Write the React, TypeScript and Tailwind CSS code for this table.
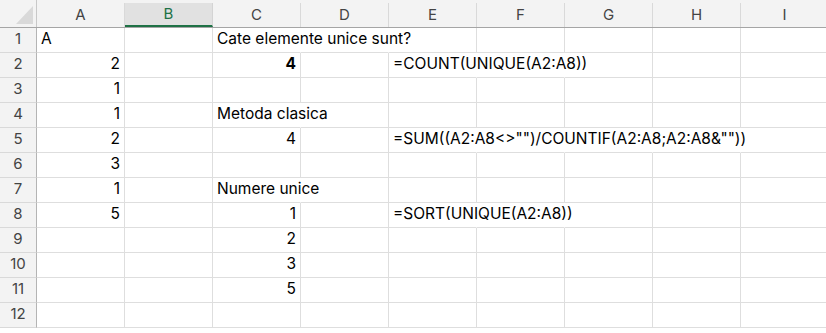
import React from 'react';

type Cell = { text: string; align?: 'left' | 'right'; bold?: boolean };

const cols = ['A', 'B', 'C', 'D', 'E', 'F', 'G', 'H', 'I'];

// cell contents by row (1-based) and column letter
const data: Record<number, Record<string, Cell>> = {
  1: { A: { text: 'A' }, C: { text: 'Cate elemente unice sunt?' } },
  2: { A: { text: '2', align: 'right' }, C: { text: '4', align: 'right', bold: true }, E: { text: '=COUNT(UNIQUE(A2:A8))' } },
  3: { A: { text: '1', align: 'right' } },
  4: { A: { text: '1', align: 'right' }, C: { text: 'Metoda clasica' } },
  5: { A: { text: '2', align: 'right' }, C: { text: '4', align: 'right' }, E: { text: '=SUM((A2:A8<>"")/COUNTIF(A2:A8;A2:A8&""))' } },
  6: { A: { text: '3', align: 'right' } },
  7: { A: { text: '1', align: 'right' }, C: { text: 'Numere unice' } },
  8: { A: { text: '5', align: 'right' }, C: { text: '1', align: 'right' }, E: { text: '=SORT(UNIQUE(A2:A8))' } },
  9: { C: { text: '2', align: 'right' } },
  10: { C: { text: '3', align: 'right' } },
  11: { C: { text: '5', align: 'right' } },
  12: {},
};

// gridlines hidden under text that spills into the next cells
const hidden: Record<number, string[]> = {
  1: ['C', 'D'],
  2: ['E', 'F'],
  4: ['C'],
  5: ['E', 'F', 'G', 'H'],
  7: ['C'],
  8: ['E', 'F'],
};

export default function App() {
  const rows = Array.from({ length: 12 }, (_, i) => i + 1);

  return (
    <div
      className="w-[826px] h-[333px] overflow-hidden bg-white text-[15px] text-black"
      style={{ fontFamily: 'Inter, "Liberation Sans", Arial, sans-serif' }}
    >
      {/* column headers */}
      <div className="flex h-[28px] bg-[#f3f3f3] border-b border-[#a5a5a5]">
        <div className="w-[37px] shrink-0 relative border-r border-[#c8c8c8]">
          <svg className="absolute left-[16px] top-[6px]" width="18" height="19" viewBox="0 0 18 19">
            <polygon points="17,0 17,18 0,18" fill="#d9d9d9" />
          </svg>
        </div>
        {cols.map((c) =>
          c === 'B' ? (
            <div
              key={c}
              className="w-[88px] shrink-0 mt-[3px] flex items-center justify-center bg-[#e1e1e1] border-r border-[#d4d4d4] border-b-2 border-b-[#1e7145] text-[#1e7145]"
            >
              {c}
            </div>
          ) : (
            <div
              key={c}
              className="w-[88px] shrink-0 mt-[3px] flex items-center justify-center border-r border-[#d9d9d9] text-[#444]"
            >
              {c}
            </div>
          )
        )}
      </div>

      {rows.map((r) => (
        <div key={r} className="flex h-[25px]">
          <div className="w-[37px] shrink-0 flex items-end justify-center pb-[2px] bg-[#f3f3f3] border-r border-[#b4b4b4] border-b border-b-[#d9d9d9] text-[#444]">
            {r}
          </div>
          {cols.map((c) => {
            const cell = data[r]?.[c];
            const noRight = hidden[r]?.includes(c);
            return (
              <div
                key={c}
                className={
                  'w-[88px] shrink-0 relative flex items-end pb-[2px] px-[4px] whitespace-nowrap text-[15.5px] border-b border-[#dedede] ' +
                  (noRight ? 'border-r border-r-transparent ' : 'border-r ') +
                  (cell?.align === 'right' ? 'justify-end' : 'justify-start')
                }
              >
                {cell && (
                  <span className={cell.bold ? 'font-bold' : ''}>{cell.text}</span>
                )}
              </div>
            );
          })}
        </div>
      ))}
    </div>
  );
}
